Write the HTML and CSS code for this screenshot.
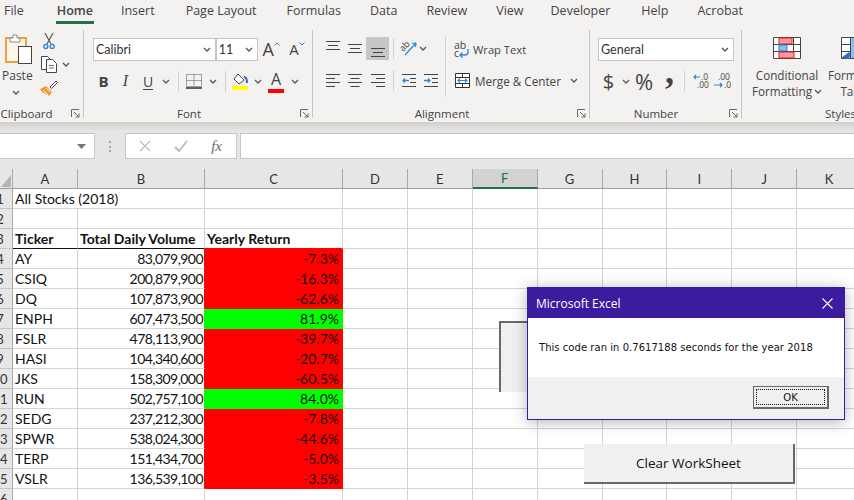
FILE: index.html
```html
<!DOCTYPE html>
<html lang="en">
<head>
  <meta charset="UTF-8" />
  <title>Excel - All Stocks</title>
  <link rel="stylesheet" href="styles.css">
</head>
<body>

  <svg class="sprite" width="0" height="0">
    <symbol id="chev" viewBox="0 0 8 5"><path d="M1 1l3 3 3-3" fill="none" stroke="#555" stroke-width="1.3"/></symbol>
    <symbol id="launcher" viewBox="0 0 9 9"><path d="M.5 8V.5H8M3 3l5 5M8 4.500V8H4.500" fill="none" stroke="#666"/></symbol>
  </svg>

  <div class="tabs">
    <span class="tab tab-file">File</span>
    <span class="tab tab-active">Home</span>
    <span class="tab tab-insert">Insert</span>
    <span class="tab tab-layout">Page Layout</span>
    <span class="tab">Formulas</span>
    <span class="tab">Data</span>
    <span class="tab">Review</span>
    <span class="tab">View</span>
    <span class="tab tab-dev">Developer</span>
    <span class="tab">Help</span>
    <span class="tab">Acrobat</span>
  </div>

  <div class="ribbon">

    <div class="group group-clipboard">
      <div class="group-body clip-body">
        <div class="paste">
          <svg width="30" height="32" viewBox="0 0 30 32">
            <rect x="2" y="5" width="20" height="24" fill="#fdf6e8" stroke="#e8a33d" stroke-width="2"/>
            <path d="M6 9V5h3V2h4v3h3v4z" fill="#fff" stroke="#8a8a8a"/>
            <rect x="14.500" y="13.500" width="13" height="17" fill="#fff" stroke="#444"/>
          </svg>
          <span class="paste-label">Paste</span>
          <svg class="chev" width="8" height="5"><use href="#chev"/></svg>
        </div>
        <div class="clip-tools">
          <svg width="12" height="17" viewBox="0 0 12 17">
            <path d="M2 0l6 11M10 0L4 11" stroke="#555" stroke-width="1.200" fill="none"/>
            <circle cx="2.800" cy="13.500" r="2" fill="#fff" stroke="#2b88d8" stroke-width="1.400"/>
            <circle cx="9.200" cy="13.500" r="2" fill="#fff" stroke="#2b88d8" stroke-width="1.400"/>
          </svg>
          <div class="clip-copy">
            <svg width="18" height="18" viewBox="0 0 18 18">
              <path d="M7.500 14.500h-6V1.500h6l3 3" fill="#fff" stroke="#444"/>
              <path d="M6.500 4.500h6l4 4v9h-10z" fill="#fff" stroke="#444"/>
              <path d="M9 10.500h5M9 13h5" stroke="#666"/>
            </svg>
            <svg class="chev" width="8" height="5"><use href="#chev"/></svg>
          </div>
          <svg class="brush" width="18" height="16" viewBox="0 0 18 16">
            <path d="M0 9l6-3 6 6-3 4-2-2-1 1-1-2-2 0z" fill="#ee9a2e"/>
            <path d="M3 10l5 5M6 8l4 4" stroke="#fff" stroke-width=".8"/>
            <path d="M10 7l6-6 1.500 1.500-6 6z" fill="#fff" stroke="#444"/>
          </svg>
        </div>
      </div>
      <div class="group-label label-left">Clipboard<svg class="launcher" width="9" height="9"><use href="#launcher"/></svg></div>
    </div>

    <div class="group group-font">
      <div class="group-body">
        <div class="row row-top">
          <div class="select select-font"><span>Calibri</span><svg width="8" height="5"><use href="#chev"/></svg></div>
          <div class="select select-size"><span>11</span><svg width="8" height="5"><use href="#chev"/></svg></div>
          <span class="grow-a">A<svg width="6" height="4" viewBox="0 0 6 4"><path d="M.5 3.500L3 1l2.500 2.500" fill="none" stroke="#2b88d8"/></svg></span>
          <span class="grow-a shrink-a">A<svg width="6" height="4" viewBox="0 0 6 4"><path d="M.5.500L3 3 5.500.500" fill="none" stroke="#2b88d8"/></svg></span>
        </div>
        <div class="row row-low">
          <span class="tool w21 t-bold">B</span>
          <span class="tool w23 t-italic">I</span>
          <span class="tool w22 t-under">U</span>
          <span class="tool w14"><svg width="8" height="5"><use href="#chev"/></svg></span>
          <span class="tool w10"><i class="vsep"></i></span>
          <span class="tool w22">
            <svg width="16" height="15" viewBox="0 0 16 15">
              <path d="M.5.500h15v12H.500zM8 .500v12M.500 6.500h15" fill="none" stroke="#555" stroke-dasharray="1 1"/>
              <path d="M0 14h16" stroke="#222" stroke-width="1.400"/>
            </svg>
          </span>
          <span class="tool w16"><svg width="8" height="5"><use href="#chev"/></svg></span>
          <span class="tool w8"><i class="vsep"></i></span>
          <span class="tool w22">
            <svg width="16" height="17" viewBox="0 0 16 17">
              <path d="M6 1l6 6-5 4-5-5z" fill="#fff" stroke="#444"/>
              <path d="M12 4c2 0 3 2 3 6" fill="none" stroke="#2b6fc4" stroke-width="2"/>
              <rect y="13" width="16" height="4" fill="#ffff00"/>
            </svg>
          </span>
          <span class="tool w14"><svg width="8" height="5"><use href="#chev"/></svg></span>
          <span class="tool w22 color-a">A<i></i></span>
          <span class="tool w16"><svg width="8" height="5"><use href="#chev"/></svg></span>
        </div>
      </div>
      <div class="group-label">Font<svg class="launcher" width="9" height="9"><use href="#launcher"/></svg></div>
    </div>

    <div class="group group-align">
      <div class="group-body">
        <div class="row row-top align-row">
          <span class="tool w22"><svg class="lines up" width="14" height="10" viewBox="0 0 14 10"><path d="M0 .500h14M2 4.500h10M0 8.500h14" stroke="#444"/></svg></span>
          <span class="tool w22"><svg width="14" height="10" viewBox="0 0 14 10"><path d="M0 .500h14M2 4.500h10M0 8.500h14" stroke="#444"/></svg></span>
          <span class="tool w23 tool-on"><svg width="14" height="10" viewBox="0 0 14 10"><path d="M0 .500h14M2 4.500h10M0 8.500h14" stroke="#444"/></svg></span>
          <span class="tool w9"><i class="vsep"></i></span>
          <span class="tool w20">
            <svg class="orient" width="17" height="17" viewBox="0 0 17 17">
              <path d="M5 15L16 3M16 3l-4 .5M16 3l-.5 4" fill="none" stroke="#2b88d8" stroke-width="1.200"/>
              <text x="0" y="9" class="orient-text" transform="rotate(-45 5 7)">ab</text>
            </svg>
          </span>
          <span class="tool w10"><svg width="8" height="5"><use href="#chev"/></svg></span>
          <span class="tool w17"></span>
          <i class="vsep vsep-tall"></i>
          <span class="wide-btn wrap-btn">
            <svg width="15" height="16" viewBox="0 0 15 16">
              <text x="0" y="7" class="abc">ab</text>
              <text x="0" y="15" class="abc">c</text>
              <path d="M14 7v3c0 2-1 3-3 3H6m2.500-2.500L6 13l2.500 2.500" fill="none" stroke="#2b88d8" stroke-width="1.400"/>
            </svg>
            <span>Wrap Text</span>
          </span>
        </div>
        <div class="row row-low align-row">
          <span class="tool w22"><svg width="14" height="14" viewBox="0 0 14 14"><path d="M0 .500h14M0 4.500h9M0 8.500h14M0 12.500h9" stroke="#444"/></svg></span>
          <span class="tool w22"><svg width="14" height="14" viewBox="0 0 14 14"><path d="M0 .500h14M2.500 4.500h9M0 8.500h14M2.500 12.500h9" stroke="#444"/></svg></span>
          <span class="tool w23"><svg width="14" height="14" viewBox="0 0 14 14"><path d="M0 .500h14M5 4.500h9M0 8.500h14M5 12.500h9" stroke="#444"/></svg></span>
          <span class="tool w9"><i class="vsep"></i></span>
          <span class="tool w22"><svg width="14" height="14" viewBox="0 0 14 14"><path d="M0 .500h14M8 4.500h6M8 8.500h6M0 12.500h14" stroke="#444"/><path d="M7 6.500H1m2-2l-2 2 2 2" fill="none" stroke="#2b88d8" stroke-width="1.300"/></svg></span>
          <span class="tool w22"><svg width="14" height="14" viewBox="0 0 14 14"><path d="M0 .500h14M8 4.500h6M8 8.500h6M0 12.500h14" stroke="#444"/><path d="M0 6.500h6m-2-2l2 2-2 2" fill="none" stroke="#2b88d8" stroke-width="1.300"/></svg></span>
          <span class="tool w10"></span>
          <span class="wide-btn merge-btn">
            <svg width="15" height="15" viewBox="0 0 15 15">
              <path d="M.500.500h14v14H.500zM.500 4.500h14M.500 10.500h14M7.500.500v4M7.500 10.500v4" fill="#fff" stroke="#333"/>
              <path d="M3 7.500h9M5 5.500l-2 2 2 2M10 5.500l2 2-2 2" fill="none" stroke="#2b88d8" stroke-width="1.200"/>
            </svg>
            <span>Merge &amp; Center</span>
            <svg class="merge-chev" width="8" height="5"><use href="#chev"/></svg>
          </span>
        </div>
      </div>
      <div class="group-label">Alignment<svg class="launcher" width="9" height="9"><use href="#launcher"/></svg></div>
    </div>

    <div class="group group-number">
      <div class="group-body">
        <div class="row row-top">
          <div class="select select-number"><span>General</span><svg width="8" height="5"><use href="#chev"/></svg></div>
        </div>
        <div class="row row-low">
          <span class="tool w21 t-big">$</span>
          <span class="tool w14"><svg width="8" height="5"><use href="#chev"/></svg></span>
          <span class="tool w22 t-big t-pct">%</span>
          <span class="tool w23 t-comma">,</span>
          <span class="tool w12"><i class="vsep"></i></span>
          <span class="tool w22 dec">
            <svg width="16" height="16" viewBox="0 0 16 16">
              <text x="8" y="7" class="dec-text">.0</text>
              <text x="4" y="15" class="dec-text">.00</text>
              <path d="M7 4H1m2-2L1 4l2 2" fill="none" stroke="#2b88d8" stroke-width="1.200"/>
            </svg>
          </span>
          <span class="tool w22 dec">
            <svg width="18" height="16" viewBox="0 0 18 16">
              <text x="4" y="7" class="dec-text">.00</text>
              <text x="10" y="15" class="dec-text">.0</text>
              <path d="M0 12h8m-2-2l2 2-2 2" fill="none" stroke="#2b88d8" stroke-width="1.200"/>
            </svg>
          </span>
        </div>
      </div>
      <div class="group-label">Number<svg class="launcher" width="9" height="9"><use href="#launcher"/></svg></div>
    </div>

    <div class="group group-styles">
      <div class="group-body styles-body">
        <div class="style-btn style-cf">
          <svg width="28" height="22" viewBox="0 0 28 22">
            <path d="M.5.500h27v21H.500zM.500 7.500h27M.500 14.500h27M6.500.500v21M13.500.500v21M20.500.500v21" fill="#fff" stroke="#444"/>
            <rect x="6" y="1" width="13" height="6" fill="#ff9aa2" stroke="#d8201c"/>
            <rect x="6" y="8" width="8" height="6" fill="#8cc0ec" stroke="#2b88d8"/>
            <rect x="6" y="15" width="15" height="6" fill="#ff9aa2" stroke="#d8201c"/>
          </svg>
          <span>Conditional</span>
          <span>Formatting <svg width="8" height="5"><use href="#chev"/></svg></span>
        </div>
        <div class="style-btn style-ft">
          <svg width="28" height="22" viewBox="0 0 28 22">
            <path d="M.5.500h27v21H.500zM.500 7.500h27M.500 14.500h27M9.500.500v21M18.500.500v21" fill="#fff" stroke="#444"/>
            <rect x="10" y="1" width="17" height="20" fill="#8cc0ec"/>
            <path d="M0 21l8-6 2 3-3 4z" fill="#2b6fc4"/>
          </svg>
          <span>Format as</span>
          <span>Table</span>
        </div>
      </div>
      <div class="group-label label-styles">Styles</div>
    </div>
  </div>

  <div class="formula-bar">
    <div class="name-box"><svg width="9" height="5" viewBox="0 0 9 5"><path d="M0 0h9L4.500 5z" fill="#777"/></svg></div>
    <div class="grip"></div>
    <div class="fx-box">
      <svg width="12" height="12" viewBox="0 0 12 12"><path d="M1 1l10 10M11 1L1 11" stroke="#bdbdbd" stroke-width="1.300"/></svg>
      <svg width="14" height="12" viewBox="0 0 14 12"><path d="M1 7l4 4 8-10" fill="none" stroke="#bdbdbd" stroke-width="2"/></svg>
      <span class="fx">fx</span>
    </div>
    <div class="formula-input"></div>
  </div>

  <div class="sheet">
    <table class="grid">
      <colgroup>
        <col class="c-head"><col class="c-a"><col class="c-b"><col class="c-c"><col class="c-std"><col class="c-std"><col class="c-std"><col class="c-std"><col class="c-std"><col class="c-std"><col class="c-std"><col class="c-std">
      </colgroup>
      <tr class="col-heads"><th class="corner"><svg width="10" height="12" viewBox="0 0 10 12"><path d="M10 0v12H0z" fill="#b4b4b4"/></svg></th><th>A</th><th>B</th><th>C</th><th>D</th><th>E</th><th class="col-on">F</th><th>G</th><th>H</th><th>I</th><th>J</th><th>K</th></tr>
      <tr><th><span>1</span></th><td colspan="2">All Stocks (2018)</td><td></td><td></td><td></td><td></td><td></td><td></td><td></td><td></td><td></td></tr>
      <tr><th><span>2</span></th><td></td><td></td><td></td><td></td><td></td><td></td><td></td><td></td><td></td><td></td><td></td></tr>
      <tr class="titles"><th><span>3</span></th><td>Ticker</td><td>Total Daily Volume</td><td class="title-last">Yearly Return</td><td></td><td></td><td></td><td></td><td></td><td></td><td></td><td></td></tr>
      <tr><th><span>4</span></th><td>AY</td><td class="num vol">83,079,900</td><td class="num bad">-7.3%</td><td></td><td></td><td></td><td></td><td></td><td></td><td></td><td></td></tr>
      <tr><th><span>5</span></th><td>CSIQ</td><td class="num vol">200,879,900</td><td class="num bad">-16.3%</td><td></td><td></td><td></td><td></td><td></td><td></td><td></td><td></td></tr>
      <tr><th><span>6</span></th><td>DQ</td><td class="num vol">107,873,900</td><td class="num bad">-62.6%</td><td></td><td></td><td></td><td></td><td></td><td></td><td></td><td></td></tr>
      <tr><th><span>7</span></th><td>ENPH</td><td class="num vol vol-good">607,473,500</td><td class="num good">81.9%</td><td></td><td></td><td></td><td></td><td></td><td></td><td></td><td></td></tr>
      <tr><th><span>8</span></th><td>FSLR</td><td class="num vol">478,113,900</td><td class="num bad">-39.7%</td><td></td><td></td><td></td><td></td><td></td><td></td><td></td><td></td></tr>
      <tr><th><span>9</span></th><td>HASI</td><td class="num vol">104,340,600</td><td class="num bad">-20.7%</td><td></td><td></td><td></td><td></td><td></td><td></td><td></td><td></td></tr>
      <tr><th><span>10</span></th><td>JKS</td><td class="num vol">158,309,000</td><td class="num bad">-60.5%</td><td></td><td></td><td></td><td></td><td></td><td></td><td></td><td></td></tr>
      <tr><th><span>11</span></th><td>RUN</td><td class="num vol vol-good">502,757,100</td><td class="num good">84.0%</td><td></td><td></td><td></td><td></td><td></td><td></td><td></td><td></td></tr>
      <tr><th><span>12</span></th><td>SEDG</td><td class="num vol">237,212,300</td><td class="num bad">-7.8%</td><td></td><td></td><td></td><td></td><td></td><td></td><td></td><td></td></tr>
      <tr><th><span>13</span></th><td>SPWR</td><td class="num vol">538,024,300</td><td class="num bad">-44.6%</td><td></td><td></td><td></td><td></td><td></td><td></td><td></td><td></td></tr>
      <tr><th><span>14</span></th><td>TERP</td><td class="num vol">151,434,700</td><td class="num bad">-5.0%</td><td></td><td></td><td></td><td></td><td></td><td></td><td></td><td></td></tr>
      <tr><th><span>15</span></th><td>VSLR</td><td class="num vol">136,539,100</td><td class="num bad">-3.5%</td><td></td><td></td><td></td><td></td><td></td><td></td><td></td><td></td></tr>
      <tr><th><span>16</span></th><td></td><td></td><td></td><td></td><td></td><td></td><td></td><td></td><td></td><td></td><td></td></tr>
    </table>

    <div class="sheet-btn btn-pressed"></div>
    <div class="sheet-btn btn-clear">Clear WorkSheet</div>

    <div class="dialog">
      <div class="dialog-title">
        <span>Microsoft Excel</span>
        <svg width="11" height="11" viewBox="0 0 11 11"><path d="M.5.500l10 10M10.500.500l-10 10" stroke="#fff" stroke-width="1.100"/></svg>
      </div>
      <div class="dialog-msg">This code ran in 0.7617188 seconds for the year 2018</div>
      <div class="dialog-foot">
        <div class="ok-btn"><span>OK</span></div>
      </div>
    </div>
  </div>

</body>
</html>
```

FILE: styles.css
```css
* {
  box-sizing: border-box;
}

body {
  margin: 0;
  width: 854px;
  height: 500px;
  overflow: hidden;
  background: #fff;
  font-family: "Open Sans", sans-serif;
  color: #444;
}

.sprite {
  position: absolute;
}

svg {
  display: block;
  flex: none;
  overflow: visible;
}

/* tabs */
.tabs {
  display: flex;
  height: 28px;
  padding: 2px 0 0 4px;
  gap: 29px;
  background: #f3f2f1;
  font-size: 12.5px;
  line-height: 18px;
  white-space: nowrap;
}

.tab-file {
  margin-right: 6px;
}

.tab-active {
  height: 22px;
  margin: 0 -2px 0 -3px;
  padding: 0 1px;
  font-weight: 600;
  border-bottom: 3px solid #217346;
}

.tab-insert {
  margin-right: 2px;
}

.tab-layout {
  margin-right: 1px;
}

.tab-dev {
  margin: 0 2px 0 -2px;
}

/* ribbon */
.ribbon {
  display: flex;
  height: 94px;
  overflow: hidden;
  background: #f3f2f1;
  font-size: 12px;
}

.group {
  display: flex;
  flex-direction: column;
  flex: none;
  height: 88px;
  margin-top: 2px;
  border-right: 1px solid #c8c6c4;
}

.group-clipboard { width: 84px; }
.group-font { width: 229px; padding-left: 9px; }
.group-align { width: 277px; padding-left: 9px; }
.group-number { width: 152px; padding-left: 8px; }
.group-styles { width: 112px; border-right: none; }

.group-body {
  flex: 1;
}

.group-label {
  position: relative;
  height: 10px;
  padding-right: 27px;
  line-height: 12px;
  text-align: center;
  font-size: 11.5px;
  white-space: nowrap;
}

.group-clipboard .label-left {
  padding-right: 30px;
}

.group-styles .label-styles {
  padding: 0 0 0 83px;
  text-align: left;
}

.launcher {
  position: absolute;
  right: 3px;
  top: 1px;
}

.row {
  display: flex;
  align-items: center;
}

.row-top {
  height: 24px;
  margin-top: 7px;
}

.row-low {
  height: 24px;
  margin-top: 8px;
}

.tool {
  display: flex;
  align-items: center;
  justify-content: center;
  height: 23px;
  flex: none;
}

.w8 { width: 8px; }
.w9 { width: 9px; }
.w10 { width: 10px; }
.w12 { width: 12px; }
.w14 { width: 14px; }
.w16 { width: 16px; }
.w17 { width: 17px; }
.w20 { width: 20px; }
.w21 { width: 21px; }
.w22 { width: 22px; }
.w23 { width: 23px; }

.vsep {
  display: block;
  width: 1px;
  height: 21px;
  background: #d2d0ce;
}

.vsep-tall {
  height: 60px;
  align-self: flex-start;
  margin-bottom: -36px;
  flex: none;
}

/* clipboard */
.clip-body {
  display: flex;
}

.paste {
  display: flex;
  flex-direction: column;
  align-items: flex-start;
  width: 36px;
  padding: 3px 0 0 4px;
}

.paste-label {
  margin: 2px 0 0 -2px;
  line-height: 18px;
}

.paste .chev {
  margin: 5px 0 0 8px;
}

.clip-tools {
  display: flex;
  flex-direction: column;
  align-items: flex-start;
  padding: 3px 0 0 4px;
}

.clip-tools > svg:first-child {
  margin-left: 3px;
}

.clip-copy {
  display: flex;
  align-items: center;
  gap: 4px;
  margin-top: 5px;
}

.brush {
  margin-top: 7px;
}

/* font */
.select {
  display: flex;
  align-items: center;
  justify-content: space-between;
  height: 23px;
  padding: 0 4px 0 2px;
  background: #fff;
  border: 1px solid #c8c6c4;
  color: #333;
  font-family: "Lato", sans-serif;
  font-size: 12.5px;
}

.select-font {
  width: 124px;
}

.select-size {
  width: 43px;
}

.select-number {
  width: 136px;
}

.grow-a {
  display: flex;
  align-items: flex-start;
  width: 23px;
  margin-left: 4px;
  font-size: 18px;
  line-height: 22px;
}

.grow-a svg {
  margin-top: 4px;
}

.shrink-a {
  font-size: 15px;
}

.t-bold {
  font-weight: 700;
  font-size: 15px;
}

.t-italic {
  font-family: "Liberation Serif", serif;
  font-style: italic;
  font-size: 16px;
}

.t-under {
  font-size: 14px;
  text-decoration: underline;
  text-underline-offset: 2px;
}

.color-a {
  position: relative;
  font-size: 16px;
  line-height: 16px;
  padding-bottom: 4px;
}

.color-a i {
  position: absolute;
  left: 3px;
  bottom: 0;
  width: 16px;
  height: 4px;
  background: #ff0000;
}

/* alignment */
.align-row {
  align-items: flex-start;
}

.tool-on {
  background: #c8c6c4;
}

.tool-on svg {
  margin-top: 9px;
}

.lines.up {
  margin-bottom: 5px;
}

.orient-text {
  font-family: "Open Sans", sans-serif;
  font-size: 9px;
  fill: #444;
}

.abc {
  font-family: "Open Sans", sans-serif;
  font-size: 10.500px;
  fill: #444;
}

.wide-btn {
  display: flex;
  align-items: center;
  gap: 4px;
  height: 23px;
  white-space: nowrap;
  font-size: 11.2px;
}

.wrap-btn {
  margin-left: 8px;
  padding-top: 2px;
}

.merge-btn {
  margin-left: 3px;
  gap: 5px;
  font-size: 11.7px;
}

.merge-chev {
  margin-left: 4px;
}

/* number */
.t-big {
  font-size: 20px;
}

.t-pct {
  font-size: 22px;
}

.t-comma {
  font-family: "Liberation Serif", serif;
  font-size: 36px;
  font-weight: 700;
  line-height: 14px;
  padding: 0 0 20px 6px;
}

.dec-text {
  font-family: "Open Sans", sans-serif;
  font-size: 8.500px;
  fill: #444;
}

/* styles */
.styles-body {
  display: flex;
  padding-left: 11px;
}

.style-btn {
  display: flex;
  flex-direction: column;
  align-items: center;
  flex: none;
  line-height: 16px;
  font-size: 11.700px;
  white-space: nowrap;
}

.style-btn svg {
  margin: 7px 0 8px;
}

.style-btn span {
  display: flex;
  align-items: center;
  gap: 2px;
}

.style-btn span svg {
  margin: 0;
}

.style-cf {
  width: 68px;
}

.style-ft {
  margin-left: 7px;
}

/* formula bar */
.formula-bar {
  display: flex;
  height: 47px;
  padding: 11px 0 10px;
  background: linear-gradient(#d2cfcb, #e6e6e6 9px);
}

.name-box {
  display: flex;
  align-items: center;
  justify-content: flex-end;
  width: 95px;
  padding-right: 8px;
  background: #fff;
  border: 1px solid #c6c6c6;
  border-left: none;
}

.grip {
  width: 2px;
  height: 11px;
  margin: 8px 14px 0 14px;
  border-left: 2px dotted #a6a6a6;
}

.fx-box {
  display: flex;
  align-items: center;
  justify-content: space-between;
  width: 112px;
  padding: 0 14px 0 13px;
  background: #fff;
  border: 1px solid #c6c6c6;
}

.fx {
  font-family: "Liberation Serif", serif;
  font-style: italic;
  font-size: 15px;
  color: #666;
}

.formula-input {
  flex: 1;
  margin-left: 3px;
  background: #fff;
  border: 1px solid #c6c6c6;
  border-right: none;
}

/* sheet */
.sheet {
  position: relative;
  height: 331px;
  overflow: hidden;
}

.grid {
  table-layout: fixed;
  width: 860px;
  border-collapse: separate;
  border-spacing: 0;
  font-family: "Lato", sans-serif;
  font-size: 14px;
  color: #111;
}

.c-head { width: 13px; }
.c-a { width: 65px; }
.c-b { width: 127px; }
.c-c { width: 138px; }
.c-std { width: 64.900px; }

.grid tr {
  height: 20px;
}

.grid td {
  height: 20px;
  padding: 0 2px;
  line-height: 18px;
  border-right: 1px solid #d4d4d4;
  border-bottom: 1px solid #d4d4d4;
  white-space: nowrap;
  overflow: hidden;
}

.grid th {
  height: 20px;
  padding: 0;
  overflow: hidden;
  background: #e6e6e6;
  font-weight: 400;
  font-size: 13px;
  color: #333;
  border-right: 1px solid #a8a8a8;
  border-bottom: 1px solid #c6c6c6;
}

.grid th span {
  display: block;
  width: 26px;
  margin-left: -13px;
  text-align: center;
}

.col-heads th {
  border-bottom: 1px solid #9e9e9e;
}

.grid th.corner {
  padding: 6px 0 0 1px;
  vertical-align: top;
}

.grid th.col-on {
  background: #d2d2d2;
  color: #217346;
  border-bottom: 2px solid #217346;
}

.titles td {
  font-weight: 700;
  border-bottom-color: #111;
}

.titles td:nth-child(n+5) {
  font-weight: 400;
  border-bottom-color: #d4d4d4;
}

.titles .title-last {
  border-bottom-color: #ff0000;
}

.grid .num {
  text-align: right;
}

.grid .vol {
  padding-right: 1px;
  letter-spacing: -0.55px;
  border-right-color: #ff0000;
}

.grid .vol-good {
  border-right-color: #00ff00;
}

.grid .bad,
.grid .good {
  padding-right: 3px;
  color: #111;
  border-color: transparent;
}

.grid .bad {
  background: #ff0000;
}

.grid .good {
  background: #00ff00;
}

.sheet-btn {
  position: absolute;
  background: #f0f0f0;
}

.btn-pressed {
  left: 499px;
  top: 152px;
  width: 100px;
  height: 71px;
  border-top: 2px solid #696969;
  border-left: 2px solid #696969;
}

.btn-clear {
  left: 584px;
  top: 275px;
  width: 211px;
  height: 40px;
  border-right: 2px solid #696969;
  border-bottom: 2px solid #696969;
  color: #111;
  font-size: 13.500px;
  line-height: 39px;
  text-align: center;
}

/* message box */
.dialog {
  position: absolute;
  left: 527px;
  top: 118px;
  width: 318px;
  height: 133px;
  display: flex;
  flex-direction: column;
  background: #f0f0f0;
  border: 1px solid #3b1c9e;
  box-shadow: 0 2px 14px rgba(0, 0, 0, 0.3);
}

.dialog-title {
  display: flex;
  align-items: center;
  justify-content: space-between;
  height: 30px;
  padding: 0 11px 0 8px;
  background: #3b1c9e;
  color: #fff;
  font-size: 12px;
}

.dialog-msg {
  height: 59px;
  padding-left: 11px;
  background: #fff;
  color: #111;
  font-family: "DejaVu Sans", sans-serif;
  font-size: 10px;
  letter-spacing: 0.04px;
  line-height: 59px;
  white-space: nowrap;
}

.dialog-foot {
  display: flex;
  justify-content: flex-end;
  padding: 9px 15px 0 0;
}

.ok-btn {
  width: 76px;
  height: 23px;
  padding: 2px;
  background: #f0f0f0;
  border: 1px solid #696969;
  border-right-width: 2px;
  border-bottom-width: 2px;
  font-family: "DejaVu Sans", sans-serif;
  font-size: 10px;
  color: #111;
}

.ok-btn span {
  display: block;
  height: 100%;
  line-height: 16px;
  text-align: center;
  border: 1px dotted #111;
}
```
